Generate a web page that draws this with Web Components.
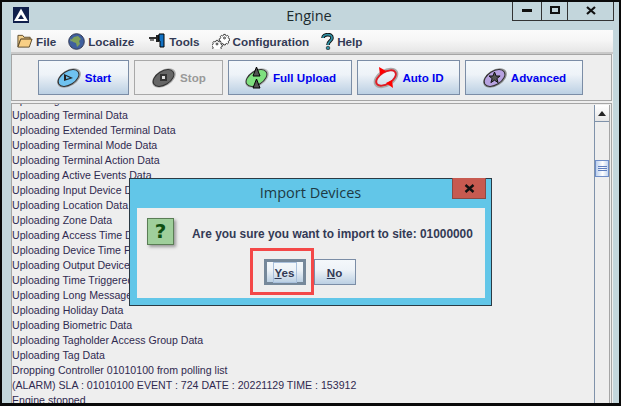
<!DOCTYPE html>
<html>
<head>
<meta charset="utf-8">
<title>Engine</title>
<style>
  html, body { margin: 0; padding: 0; width: 621px; height: 406px; overflow: hidden; background: #000; }
</style>
</head>
<body>
<engine-window>
  <engine-menu slot="menu"></engine-menu>
  <engine-toolbar slot="toolbar">
    <tool-button icon="start" w="91">Start</tool-button>
    <tool-button icon="stop" w="89" disabled>Stop</tool-button>
    <tool-button icon="upload" w="124">Full Upload</tool-button>
    <tool-button icon="auto" w="103">Auto ID</tool-button>
    <tool-button icon="advanced" w="118">Advanced</tool-button>
  </engine-toolbar>
  <engine-log slot="log"></engine-log>
  <import-dialog slot="dialog"></import-dialog>
</engine-window>

<script>
const GEAR = 'M-1-4.500h2l.4 1.300 1.300.6 1.200-.6 1.400 1.400-.6 1.200.6 1.300 1.300.4v2l-1.300.4-.6 1.300.6 1.200-1.400 1.400-1.200-.6-1.300.6-.4 1.300h-2l-.4-1.300-1.300-.6-1.200.6-1.400-1.400.6-1.200-.6-1.300-1.300-.4v-2l1.300-.4.6-1.300-.6-1.200 1.400-1.400 1.200.6 1.300-.6z';
const ICONS = {
  folder: `<svg width="16" height="16" viewBox="0 0 17 16"><path d="M1 2h5l1.500 2H14v2H4L1 14z" fill="#f3d08c" stroke="#5b4a2a"/><path d="M4 6h12l-3 8.500H1z" fill="#f8cf85" stroke="#5b4a2a"/></svg>`,
  globe: `<svg width="17" height="17" viewBox="0 0 17 17"><circle cx="8.500" cy="8.500" r="7.800" fill="#3f5f9e" stroke="#333a55"/><path d="M6 4l4-1 3 3-2 2 1 3-3 3-1-4-3-1-2-2z" fill="#7fa05a"/><path d="M2 6l2 1-1 2z" fill="#86a868"/></svg>`,
  tools: `<svg width="18" height="16" viewBox="0 0 18 16"><path d="M1 4h7V6H1z" fill="#333"/><path d="M8 2h3v7H8z" fill="#222"/><path d="M11 1h5v13h-4V8h-1z" fill="#1272c4" stroke="#000"/><path d="M3 6v2M5 6v2" stroke="#000"/></svg>`,
  gears: `<svg width="18" height="16" viewBox="0 0 18 16" fill="#fff" stroke="#111"><g transform="translate(12.500 5) scale(.8)"><path d="${GEAR}"/><circle r="1.200"/></g><g transform="translate(5 11) scale(.8)"><path d="${GEAR}"/><circle r="1.200"/></g></svg>`,
  help: `<svg width="13" height="17" viewBox="0 0 13 17"><path d="M2 5C2 1 11 0 11 5c0 3-4 3-4 7" fill="none" stroke="#111" stroke-width="3.600"/><path d="M2 5C2 1 11 0 11 5c0 3-4 3-4 7" fill="none" stroke="#2f8fa3" stroke-width="1.800"/><circle cx="7" cy="15" r="1.800" fill="#2f8fa3" stroke="#111" stroke-width=".6"/></svg>`
};

function discIcon(fill, inner, rim) {
  return `<svg width="26" height="24" viewBox="0 0 26 24"><ellipse cx="13" cy="12" rx="13" ry="8" transform="rotate(-32 13 12)" fill="${rim}" opacity=".75"/><ellipse cx="12.500" cy="12" rx="11.500" ry="6.800" transform="rotate(-32 12.500 12)" fill="${fill}" stroke="#333"/>${inner}</svg>`;
}

const BIG_ICONS = {
  start: discIcon('#6fc2f0', '<path d="M8 8l9 4-9 3z" fill="#222"/><path d="M10 10l4 2-4 1z" fill="#6fc2f0"/>', '#888'),
  stop: discIcon('#666', '<rect x="9" y="8" width="7" height="7" fill="#333"/><rect x="11" y="10" width="3" height="3" fill="#ddd"/>', '#999'),
  upload: discIcon('#7fe07f', '<path d="M12.500 1l3.500 9H9z" fill="#555" stroke="#000"/><path d="M12.500 13l3.500 9H9z" fill="#555" stroke="#000"/>', '#aaa'),
  auto: `<svg width="26" height="24" viewBox="0 0 26 24"><ellipse cx="13" cy="12" rx="12" ry="7" transform="rotate(-32 13 12)" fill="none" stroke="#aaa" stroke-width="3"/><ellipse cx="13" cy="12" rx="11" ry="6" transform="rotate(-32 13 12)" fill="none" stroke="#e01b24" stroke-width="1.800"/><path d="M6 1l1 8 6-4z" fill="#f00"/><path d="M20 22l-1-8-6 3z" fill="#f00"/></svg>`,
  advanced: discIcon('#b7a2e0', '<path d="M12.500 6l1.600 4h4l-3.200 2.600 1.200 4-3.600-2.400-3.600 2.400 1.200-4L7 10h4z" fill="#555" stroke="#111"/>', '#777')
};

class EngineWindow extends HTMLElement {
  constructor() {
    super();
    this.attachShadow({ mode: 'open' });
    this.shadowRoot.innerHTML = `
      <style>
        :host {
          display: block;
          position: relative;
          box-sizing: border-box;
          width: 621px;
          height: 406px;
          overflow: hidden;
          border: solid #0a0a0a;
          border-width: 2px 2px 3px 2px;
          background: #c3d6dc;
          font-family: "Liberation Sans", Arial, sans-serif;
        }
        .title {
          height: 28px;
          display: flex;
          align-items: flex-start;
          position: relative;
          padding: 5px 0 0 11px;
          box-sizing: border-box;
        }
        .logo { width: 16px; height: 16px; }
        .caption {
          position: absolute;
          left: 0;
          right: 0;
          top: 4px;
          text-align: center;
          font-size: 14.500px;
          color: #1c2a2e;
          font-family: "Open Sans", "Liberation Sans", sans-serif;
          padding-right: 3px;
        }
        .controls {
          position: absolute;
          top: -2px;
          right: 5px;
          height: 21px;
          display: flex;
          border: 1px solid #333;
          border-top: 0;
          box-sizing: border-box;
        }
        .controls span {
          display: flex;
          align-items: center;
          justify-content: center;
          border-left: 1px solid #333;
          box-sizing: border-box;
        }
        .controls span:first-child { border-left: 0; }
        .body {
          margin: 0 6px 0 9px;
          height: 373px;
          background: #eee;
          display: flex;
          flex-direction: column;
        }
      </style>
      <div class="title">
        <svg class="logo" viewBox="0 0 16 16"><rect width="16" height="16" fill="#10204c"/><path d="M8 1.500L15 14H1z" fill="#fff"/><path d="M8 7.500L5 12h6z" fill="#10204c"/></svg>
        <div class="caption">Engine</div>
        <div class="controls">
          <span style="width:28px"><svg width="10" height="4"><rect width="10" height="3" y="1" fill="#111"/></svg></span>
          <span style="width:26px"><svg width="10" height="8"><rect x="1" y="1" width="8" height="6" fill="none" stroke="#111" stroke-width="2"/></svg></span>
          <span style="width:46px"><svg width="10" height="9" viewBox="0 0 10 9"><path d="M1 1l8 7M9 1L1 8" stroke="#111" stroke-width="2.200"/></svg></span>
        </div>
      </div>
      <div class="body">
        <slot name="menu"></slot>
        <slot name="toolbar"></slot>
        <slot name="log"></slot>
      </div>
      <slot name="dialog"></slot>
    `;
  }
}

class EngineMenu extends HTMLElement {
  constructor() {
    super();
    this.attachShadow({ mode: 'open' });
    const items = [['folder', 'File'], ['globe', 'Localize'], ['tools', 'Tools'], ['gears', 'Configuration'], ['help', 'Help']];
    this.shadowRoot.innerHTML = `
      <style>
        :host {
          display: flex;
          align-items: center;
          height: 24px;
          gap: 12px;
          padding-left: 6px;
          box-sizing: border-box;
          background: linear-gradient(#fbfbfb, #f6f6f6 45%, #e6e6e6);
          border-bottom: 2px solid #c9c9c9;
          font-size: 11.700px;
          font-weight: bold;
          color: #333a55;
        }
        div { display: flex; align-items: center; gap: 3px; }
        div:nth-child(4) { margin-left: 2px; }
        svg { display: block; }
      </style>
      ${items.map(([i, t]) => `<div>${ICONS[i]}<span>${t}</span></div>`).join('')}
    `;
  }
}

class EngineToolbar extends HTMLElement {
  constructor() {
    super();
    this.attachShadow({ mode: 'open' });
    this.shadowRoot.innerHTML = `
      <style>
        :host {
          display: flex;
          gap: 5px;
          align-items: center;
          height: 47px;
          box-sizing: border-box;
          padding: 0 0 0 26px;
          margin: 0 1px 0 0;
          border: 1px solid #a5a5a5;
          background: #eee;
        }
      </style>
      <slot></slot>
    `;
  }
}

class ToolButton extends HTMLElement {
  constructor() {
    super();
    this.attachShadow({ mode: 'open' });
    const icon = BIG_ICONS[this.getAttribute('icon')];
    const w = this.getAttribute('w');
    const off = this.hasAttribute('disabled');
    this.shadowRoot.innerHTML = `
      <style>
        :host {
          display: flex;
          align-items: center;
          justify-content: center;
          gap: 3px;
          box-sizing: border-box;
          height: 35px;
          width: ${w}px;
          border: 1px solid ${off ? '#a8a8a8' : '#7b8da6'};
          background: ${off ? '#eee' : 'linear-gradient(#f4f8fb, #eef3f8 40%, #bcd0e3)'};
          color: ${off ? '#999' : '#0000ee'};
          font-size: 11.600px;
          font-weight: bold;
        }
        svg { display: block; }
      </style>
      ${icon}<span><slot></slot></span>
    `;
  }
}

class EngineLog extends HTMLElement {
  constructor() {
    super();
    this.attachShadow({ mode: 'open' });
    const lines = [
      'Uploading Controller Data',
      'Uploading Terminal Data',
      'Uploading Extended Terminal Data',
      'Uploading Terminal Mode Data',
      'Uploading Terminal Action Data',
      'Uploading Active Events Data',
      'Uploading Input Device Data',
      'Uploading Location Data',
      'Uploading Zone Data',
      'Uploading Access Time Data',
      'Uploading Device Time Profile Data',
      'Uploading Output Device Data',
      'Uploading Time Triggered Data',
      'Uploading Long Message Data',
      'Uploading Holiday Data',
      'Uploading Biometric Data',
      'Uploading Tagholder Access Group Data',
      'Uploading Tag Data',
      'Dropping Controller 01010100 from polling list',
      '(ALARM) SLA : 01010100 EVENT : 724 DATE : 20221129 TIME : 153912',
      'Engine stopped'
    ];
    this.shadowRoot.innerHTML = `
      <style>
        :host {
          display: flex;
          height: 300px;
          margin: 2px 1px 0 0;
          border: 1px solid #a5a5a5;
          border-bottom: 0;
          box-sizing: border-box;
          background: #eee;
          overflow: hidden;
        }
        .text {
          flex: 1;
          overflow: hidden;
          font-size: 10.600px;
          line-height: 15px;
          color: #302a50;
        }
        .inner { margin-top: -11px; }
        .bar {
          width: 16px;
          margin: 1px 1px 0 0;
          box-sizing: border-box;
          border-left: 1px solid #7f92aa;
          border-right: 1px solid #a5a5a5;
          display: flex;
          flex-direction: column;
        }
        .up {
          height: 16px;
          border-bottom: 1px solid #7f92aa;
          background: linear-gradient(#fff, #e6e6e6);
          display: flex;
          align-items: center;
          justify-content: center;
        }
        .thumb {
          margin-top: 38px;
          height: 17px;
          border: 1px solid #6f8ec8;
          box-sizing: border-box;
          background: linear-gradient(90deg, #bcd0ee, #fff 55%, #c5d6ef);
          display: flex;
          flex-direction: column;
          align-items: center;
          justify-content: center;
          gap: 1px;
        }
        .thumb i { display: block; width: 9px; height: 1px; background: #5f7fc0; }
      </style>
      <div class="text"><div class="inner">${lines.map(l => `<div>${l}</div>`).join('')}</div></div>
      <div class="bar">
        <div class="up"><svg width="8" height="5"><path d="M4 0l4 5H0z" fill="#222"/></svg></div>
        <div class="thumb"><i></i><i></i><i></i></div>
      </div>
    `;
  }
}

class ImportDialog extends HTMLElement {
  constructor() {
    super();
    this.attachShadow({ mode: 'open' });
    this.shadowRoot.innerHTML = `
      <style>
        :host {
          position: absolute;
          left: 127px;
          top: 176px;
          width: 363px;
          height: 128px;
          box-sizing: border-box;
          border: 1px solid #2b3a44;
          background: #62c6e8;
          display: flex;
          flex-direction: column;
        }
        .head {
          height: 29px;
          display: flex;
          align-items: center;
          justify-content: center;
          position: relative;
          font-size: 14.500px;
          color: #1d3a44;
          font-family: "Open Sans", "Liberation Sans", sans-serif;
          padding-bottom: 2px;
          box-sizing: border-box;
        }
        .close {
          position: absolute;
          top: -1px;
          right: 5px;
          width: 34px;
          height: 21px;
          background: #c75a50;
          border: 1px solid #8a4a44;
          border-top: 0;
          box-sizing: border-box;
          display: flex;
          align-items: center;
          justify-content: center;
        }
        .panel {
          margin: 0 6px 0 7px;
          height: 90px;
          background: #eee;
          display: flex;
          flex-direction: column;
          box-sizing: border-box;
          padding: 10px 0 0 10px;
          position: relative;
        }
        .row { display: flex; gap: 18px; align-items: flex-start; height: 27px; }
        .q {
          width: 27px;
          height: 27px;
          box-sizing: border-box;
          border: 1px solid #5a7d55;
          background: #9fcf9b;
          box-shadow: 2px 2px 3px #999;
          color: #0f4f12;
          font-size: 20px;
          font-weight: bold;
          text-align: center;
          line-height: 25px;
          font-family: "DejaVu Sans", sans-serif;
        }
        .msg {
          font-size: 11.900px;
          font-weight: bold;
          color: #333a55;
          padding-top: 9px;
          white-space: nowrap;
        }
        .btns {
          display: flex;
          justify-content: center;
          gap: 8px;
          margin: 14px 0 0 -10px;
          padding-right: 3px;
        }
        button {
          width: 42px;
          height: 26px;
          padding: 0;
          box-sizing: border-box;
          border: 1px solid #7b8da6;
          background: linear-gradient(#f4f8fb, #eef3f8 40%, #bcd0e3);
          font: bold 11.600px "Liberation Sans", Arial, sans-serif;
          color: #333a55;
        }
        button.def { border: 3px solid #76889a; }
        button.def span { outline: 1px solid #a9c0dc; padding: 3px 1px; }
        u { text-decoration: underline; }
        .mark {
          position: absolute;
          left: 113px;
          top: 40px;
          width: 64px;
          height: 47px;
          box-sizing: border-box;
          border: 3px solid #f44848;
        }
      </style>
      <div class="head">Import Devices
        <div class="close"><svg width="11" height="9" viewBox="0 0 11 9"><path d="M1.500 1l8 7M9.500 1l-8 7" stroke="#111" stroke-width="2.400"/></svg></div>
      </div>
      <div class="panel">
        <div class="row">
          <div class="q">?</div>
          <div class="msg">Are you sure you want to import to site: 01000000</div>
        </div>
        <div class="btns">
          <button class="def"><span><u>Y</u>es</span></button>
          <button><u>N</u>o</button>
        </div>
        <div class="mark"></div>
      </div>
    `;
  }
}

customElements.define('engine-window', EngineWindow);
customElements.define('engine-menu', EngineMenu);
customElements.define('engine-toolbar', EngineToolbar);
customElements.define('tool-button', ToolButton);
customElements.define('engine-log', EngineLog);
customElements.define('import-dialog', ImportDialog);
</script>
</body>
</html>
